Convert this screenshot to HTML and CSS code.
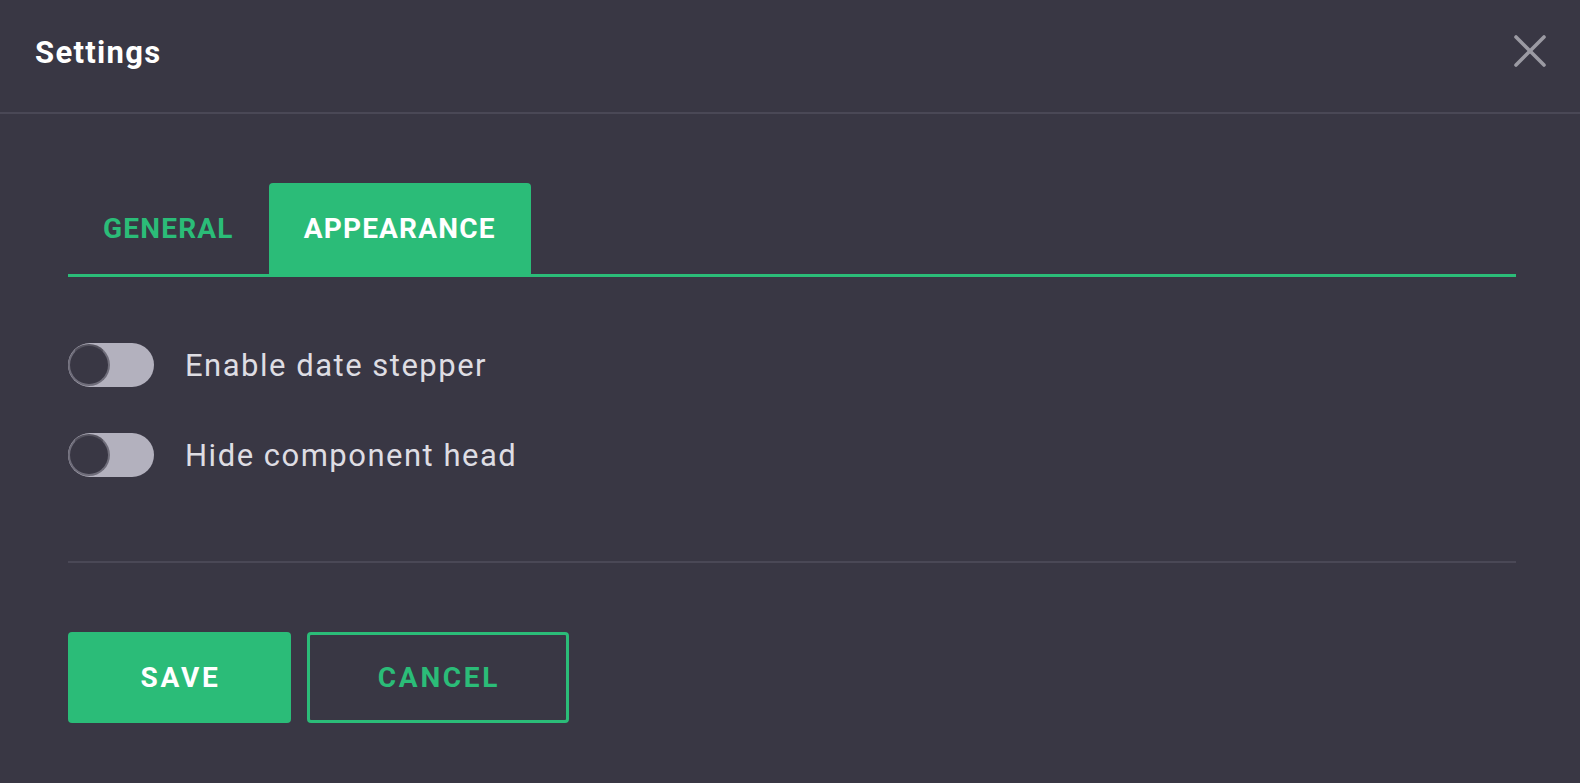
FILE: index.html
```html
<!DOCTYPE html>
<html lang="en">
<head>
<meta charset="utf-8">
<title>Settings</title>
<link rel="stylesheet" href="styles.css">
</head>
<body>
<div class="modal">
  <header class="modal-header">
    <h1 class="modal-title">Settings</h1>
    <button class="close-btn" aria-label="Close">
      <svg width="32" height="32" viewBox="0 0 32 32"><path d="M2 2 L30 30 M30 2 L2 30" stroke="#9b9aa3" stroke-width="3.6" stroke-linecap="round" fill="none"/></svg>
    </button>
  </header>
  <div class="modal-body">
    <nav class="tabs">
      <div class="tab">General</div>
      <div class="tab tab-active">Appearance</div>
    </nav>
    <div class="options">
      <label class="option">
        <span class="toggle"><span class="thumb"></span></span>
        <span class="option-label">Enable date stepper</span>
      </label>
      <label class="option">
        <span class="toggle"><span class="thumb"></span></span>
        <span class="option-label">Hide component head</span>
      </label>
    </div>
    <hr class="divider">
    <div class="actions">
      <button class="btn btn-primary">Save</button>
      <button class="btn btn-outline">Cancel</button>
    </div>
  </div>
</div>
</body>
</html>
```

FILE: styles.css
```css
html, body {
  margin: 0;
  padding: 0;
  background: #393744;
}
body {
  font-family: Roboto, "Liberation Sans", Arial, sans-serif;
  color: #dcdbe1;
  width: 1580px;
  height: 783px;
  overflow: hidden;
}
.modal {
  display: flex;
  flex-direction: column;
  height: 783px;
}
.modal-header {
  border-bottom: 2px solid #4a4856;
  display: flex;
  align-items: center;
  justify-content: space-between;
  padding: 0 34px 0 35px;
  box-sizing: border-box;
  height: 114px;
}
.modal-title {
  margin: 0;
  font-size: 31px;
  font-weight: 700;
  letter-spacing: 1.3px;
  color: #ffffff;
  margin-top: -8px;
}
.close-btn {
  background: none;
  border: 0;
  padding: 0;
  width: 32px;
  height: 32px;
  margin-top: -10px;
  cursor: pointer;
  display: flex;
}
.modal-body {
  padding: 69px 64px 0 68px;
}
.tabs {
  display: flex;
  border-bottom: 3px solid #2bbc78;
}
.tab {
  height: 91px;
  padding: 0 35px;
  display: flex;
  align-items: center;
  font-size: 28px;
  font-weight: 700;
  text-transform: uppercase;
  letter-spacing: 1.2px;
  color: #2bbc78;
}
.tab-active {
  background: #2bbc78;
  color: #ffffff;
  border-radius: 4px 4px 0 0;
}
.options {
  display: flex;
  flex-direction: column;
  gap: 46px;
  margin-top: 66px;
}
.option {
  display: flex;
  align-items: center;
  height: 44px;
}
.toggle {
  position: relative;
  width: 86px;
  height: 44px;
  border-radius: 22px;
  background: #b3b1be;
  flex: none;
}
.thumb {
  position: absolute;
  left: 0;
  top: 1px;
  width: 42px;
  height: 42px;
  box-sizing: border-box;
  border-radius: 50%;
  background: #393744;
  border: 2px solid #6f6d7a;
  border-top-color: #55535f;
}
.option-label {
  margin-left: 31px;
  font-size: 31px;
  font-weight: 400;
  letter-spacing: 1.5px;
  color: #dedde3;
}
.divider {
  margin: 84px 0 0 0;
  border: 0;
  height: 2px;
  background: #4a4856;
}
.actions {
  display: flex;
  gap: 16px;
  margin-top: 69px;
}
.btn {
  height: 91px;
  font-family: Roboto, "Liberation Sans", Arial, sans-serif;
  font-size: 28px;
  font-weight: 700;
  text-transform: uppercase;
  letter-spacing: 2.7px;
  padding: 0 0 0 2px;
  border-radius: 4px;
  cursor: pointer;
  box-sizing: border-box;
}
.btn-primary {
  width: 223px;
  background: #2bbc78;
  color: #ffffff;
  border: 0;
}
.btn-outline {
  width: 262px;
  background: transparent;
  color: #2bbc78;
  border: 3px solid #2bbc78;
}
```
